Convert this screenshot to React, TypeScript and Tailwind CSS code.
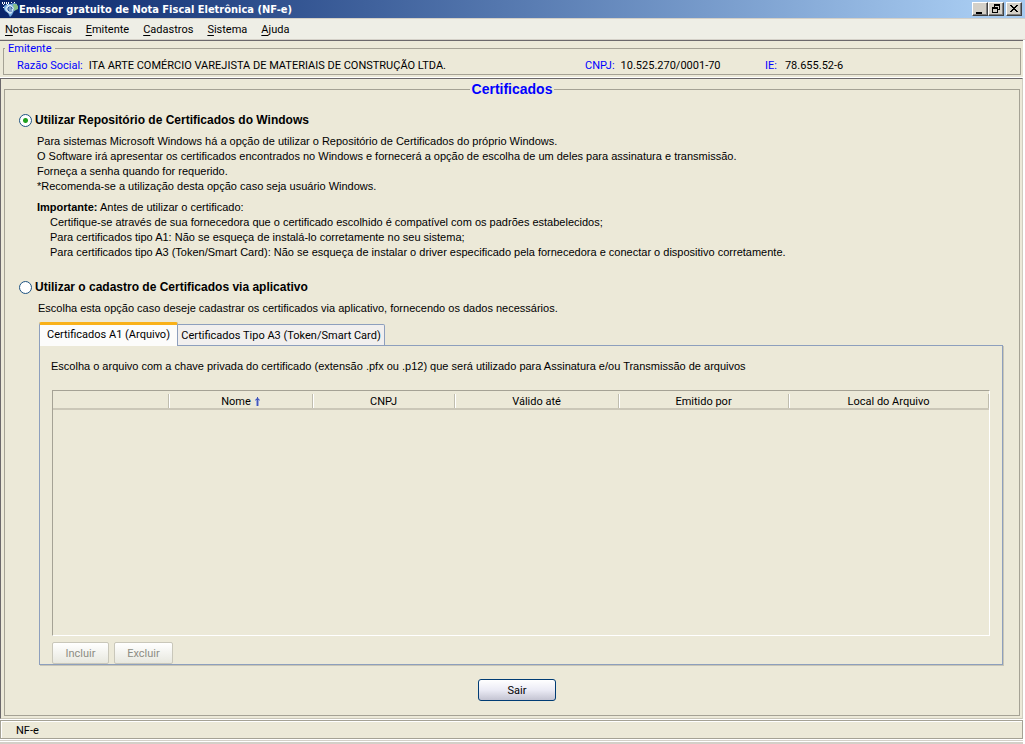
import { useState } from 'react'
import type { ReactNode } from 'react'

const menus = ['Notas Fiscais', 'Emitente', 'Cadastros', 'Sistema', 'Ajuda']

const columns = [
  { label: '', width: 'w-[116px]' },
  { label: 'Nome', width: 'w-[144px]', sorted: true },
  { label: 'CNPJ', width: 'w-[142px]' },
  { label: 'Válido até', width: 'w-[164px]' },
  { label: 'Emitido por', width: 'w-[170px]' },
  { label: 'Local do Arquivo', width: 'w-auto' }
]

function AppIcon() {
  return (
    <svg width="16" height="16" viewBox="0 0 16 16" aria-hidden="true">
      <path d="M2 5 5 3h4l3-1 3 1v4l-3 3-2 4-2 2-2-4-3-2-1-2z" fill="#6ea6dc" />
      <path d="M11 3h3l2 2v3l-4 2z" fill="#86bf86" />
      <path d="M4 6l2-2h3l3 3-2 5-2 1-3-2-2-3z" fill="#cfe3f5" />
      <path d="M0 1h1v2H0zM2 1h1v2H2zM1 3h1v1H1zM4 1h1v2H4zM6 1h1v2H6zM5 3h1v1H5zM9 1h1v1H9zM12 1h1v1h-1zM1 6h1v1H1z" fill="#fff" />
      <path d="M6 8h4V7L9 6H7L6 7v2l1 1h3" stroke="#2c5a9c" fill="none" />
    </svg>
  )
}

function SortArrow() {
  return (
    <svg width="5" height="9" viewBox="0 0 5 9" aria-hidden="true">
      <path d="M2 0h1v1h1v1h1v2H4v5H1V4H0V2h1V1h1z" fill="#9aa6dc" />
      <path d="M2 0h1v2h1v1H3v6H2V3H1V2h1z" fill="#4457b5" />
    </svg>
  )
}

function TitleButton({ label, children }: { label: string; children: ReactNode }) {
  return (
    <button
      type="button"
      aria-label={label}
      className="flex h-[14px] w-4 items-center justify-center border border-t-white border-r-[#404040] border-b-[#404040] border-l-white bg-[#d4d0c8] shadow-[inset_-1px_-1px_0_#808080]"
    >
      {children}
    </button>
  )
}

function App() {
  const [source, setSource] = useState('windows')
  const [tab, setTab] = useState('a1')

  return (
    <div className="flex min-h-screen flex-col bg-[#ece9d8] font-[Roboto,sans-serif] text-[11px] leading-[15px] text-black">
      <header className="flex h-[18px] items-center gap-px bg-linear-to-r from-[#0a246a] to-[#a6caf0] to-95% pr-[3px] pl-[2px]">
        <AppIcon />
        <h1 className="font-['DejaVu_Sans_Condensed','DejaVu_Sans',sans-serif] font-bold text-white">
          Emissor gratuito de Nota Fiscal Eletrônica (NF-e)
        </h1>
        <div className="ml-auto flex">
          <TitleButton label="Minimizar">
            <svg width="10" height="10" viewBox="0 0 10 10"><path d="M1 8h6v2H1z" /></svg>
          </TitleButton>
          <TitleButton label="Restaurar">
            <svg width="10" height="10" viewBox="0 0 10 10">
              <path d="M3 0h6v6H7V5h1V2H4v1H3zM1 3h6v6H1zM2 5v3h4V5z" fillRule="evenodd" />
            </svg>
          </TitleButton>
          <div className="w-[2px]" />
          <TitleButton label="Fechar">
            <svg width="10" height="10" viewBox="0 0 10 10" shapeRendering="crispEdges">
              <path d="M1 1h2v1h1v1h2V2h1V1h2v1H8v1H7v1H6v1h1v1h1v1h1v1H7V7H6V6H4v1H3v1H1V7h1V6h1V5h1V4H3V3H2V2H1z" />
            </svg>
          </TitleButton>
        </div>
      </header>

      <nav className="flex h-[22px] items-center gap-[14px] border-t border-b border-[#d4d0c8] bg-[#eeeee6] pl-[5px]">
        {menus.map(menu => (
          <button key={menu} type="button">
            <span className="underline underline-offset-2">{menu[0]}</span>
            {menu.slice(1)}
          </button>
        ))}
      </nav>

      <div className="flex flex-1 flex-col border-r-2 border-white">
        <section className="border-t border-b border-t-[#6b686b] border-b-white pt-px pr-[2px] pb-[2px] pl-[3px]">
          <fieldset className="h-[33px] border border-[#a5a295] pl-[13px]">
            <legend className="-ml-[12px] px-[3px] leading-[13px] text-[#0000ff]">Emitente</legend>
            <dl className="mt-[3px] flex">
              <div className="flex w-[568px] gap-[6px]">
                <dt className="text-[#0000ff]">Razão Social:</dt>
                <dd>ITA ARTE COMÉRCIO VAREJISTA DE MATERIAIS DE CONSTRUÇÃO LTDA.</dd>
              </div>
              <div className="flex w-[180px] gap-[6px]">
                <dt className="text-[#0000ff]">CNPJ:</dt>
                <dd>10.525.270/0001-70</dd>
              </div>
              <div className="flex gap-2">
                <dt className="text-[#0000ff]">IE:</dt>
                <dd>78.655.52-6</dd>
              </div>
            </dl>
          </fieldset>
        </section>

        <main className="flex flex-1 flex-col border-t border-r border-b border-l border-t-[#6b686b] border-r-[#d0cdc0] border-b-[#c9c6b8] border-l-[#6b686b] pt-[2px] pr-[2px] pb-[2px] pl-[3px]">
          <fieldset className="flex flex-1 flex-col border border-[#a5a295] font-['Liberation_Sans',Arial,sans-serif]">
            <legend className="mx-auto px-[2px] text-[14px] leading-[17px] font-bold text-[#0000ff]">Certificados</legend>
            <div className="flex flex-1 flex-col pt-[15px] pr-1 pb-3 pl-[14px]">
              <label className="flex items-center gap-[3px] text-[12px] font-bold">
                <input
                  type="radio"
                  name="source"
                  checked={source === 'windows'}
                  onChange={() => setSource('windows')}
                  className="size-[13px] appearance-none rounded-full border border-[#1d5281] bg-white checked:bg-[radial-gradient(circle,#21a121_0_2px,#ffffff_3px)]"
                />
                Utilizar Repositório de Certificados do Windows
              </label>
              <div className="mt-[6px] pl-[18px]">
                <p>Para sistemas Microsoft Windows há a opção de utilizar o Repositório de Certificados do próprio Windows.</p>
                <p>O Software irá apresentar os certificados encontrados no Windows e fornecerá a opção de escolha de um deles para assinatura e transmissão.</p>
                <p>Forneça a senha quando for requerido.</p>
                <p>*Recomenda-se a utilização desta opção caso seja usuário Windows.</p>
                <p className="mt-[6px]"><b>Importante:</b> Antes de utilizar o certificado:</p>
                <ul className="pl-[13px]">
                  <li>Certifique-se através de sua fornecedora que o certificado escolhido é compatível com os padrões estabelecidos;</li>
                  <li>Para certificados tipo A1: Não se esqueça de instalá-lo corretamente no seu sistema;</li>
                  <li>Para certificados tipo A3 (Token/Smart Card): Não se esqueça de instalar o driver especificado pela fornecedora e conectar o dispositivo corretamente.</li>
                </ul>
              </div>

              <label className="mt-5 flex items-center gap-[3px] text-[12px] font-bold">
                <input
                  type="radio"
                  name="source"
                  checked={source === 'app'}
                  onChange={() => setSource('app')}
                  className="size-[13px] appearance-none rounded-full border border-[#1d5281] bg-white checked:bg-[radial-gradient(circle,#21a121_0_2px,#ffffff_3px)]"
                />
                Utilizar o cadastro de Certificados via aplicativo
              </label>
              <p className="mt-[6px] pl-[19px]">
                Escolha esta opção caso deseje cadastrar os certificados via aplicativo, fornecendo os dados necessários.
              </p>

              <div className="mt-[6px] mr-3 ml-5 flex flex-1 flex-col">
                <div role="tablist" className="z-10 -mb-px flex items-end font-[Roboto,sans-serif]">
                  <button
                    type="button"
                    role="tab"
                    aria-selected={tab === 'a1'}
                    onClick={() => setTab('a1')}
                    className="h-6 w-[139px] rounded-t-[2px] border-t-[3px] border-r border-l border-t-[#f9b119] border-r-[#8d9fbd] border-l-[#8d9fbd] bg-[#fcfcfb] pb-[3px]"
                  >
                    Certificados A1 (Arquivo)
                  </button>
                  <button
                    type="button"
                    role="tab"
                    aria-selected={tab === 'a3'}
                    onClick={() => setTab('a3')}
                    className="h-[22px] w-[207px] rounded-tr-[2px] border-t border-r border-b border-[#8d9fbd] bg-[#f1efee]"
                  >
                    Certificados Tipo A3 (Token/Smart Card)
                  </button>
                </div>
                <div className="flex flex-1 flex-col border border-[#8d9fbd] px-3 pt-[13px] shadow-[1px_1px_0_#c8c5b6]">
                  <p className="-ml-px">
                    Escolha o arquivo com a chave privada do certificado (extensão .pfx ou .p12) que será utilizado para Assinatura e/ou Transmissão de arquivos
                  </p>
                  <div className="mt-4 min-h-[246px] flex-1 border border-t-[#a5a295] border-r-white border-b-white border-l-[#a5a295]">
                    <table className="w-full table-fixed border-collapse font-[Roboto,sans-serif]">
                      <thead>
                        <tr className="border-b-2 border-[#cbc7b8]">
                          {columns.map(column => (
                            <th key={column.label} className={`${column.width} h-[18px] p-0 pt-[3px] font-normal`}>
                              <div className="flex h-[14px] items-center justify-center gap-1 border-r border-[#c0bdae] shadow-[1px_0_0_#ffffff]">
                                {column.label}
                                {column.sorted && <SortArrow />}
                              </div>
                            </th>
                          ))}
                        </tr>
                      </thead>
                      <tbody />
                    </table>
                  </div>
                  <div className="mt-[6px] flex gap-[5px] font-[Roboto,sans-serif]">
                    <button type="button" disabled className="h-[22px] w-[57px] rounded-[2px] border border-[#c9c7ba] bg-linear-to-b from-white to-[#e8e8df] text-[#8d8d84]">
                      Incluir
                    </button>
                    <button type="button" disabled className="h-[22px] w-[59px] rounded-[2px] border border-[#c9c7ba] bg-linear-to-b from-white to-[#e8e8df] text-[#8d8d84]">
                      Excluir
                    </button>
                  </div>
                </div>
              </div>

              <button
                type="button"
                className="mt-[14px] h-[22px] w-[78px] self-center rounded-[3px] border border-[#003c74] bg-linear-to-b from-white via-[#ebebf5] to-[#c4c4d2] font-[Roboto,sans-serif]"
              >
                Sair
              </button>
            </div>
          </fieldset>
        </main>

        <footer className="border-t border-b-2 border-t-white border-b-[#d4d0c8]">
          <div className="h-[19px] border border-[#a5a295] pl-[15px] leading-[19px] shadow-[inset_1px_1px_0_#ffffff]">NF-e</div>
          <div className="h-[3px] border-t border-b border-white bg-[#d4d0c8]" />
        </footer>
      </div>
    </div>
  )
}

export default App
